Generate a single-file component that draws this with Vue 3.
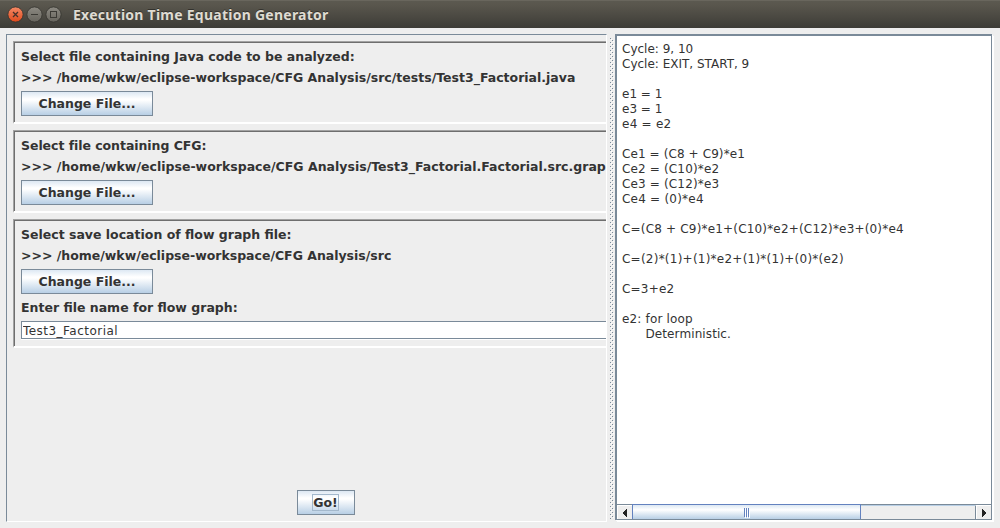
<script setup>
import { ref } from 'vue'

const fileName = ref('Test3_Factorial')
const lines = [
  ['Cycle: 9, 10', 0], ['Cycle: EXIT, START, 9', 0], ['', 0],
  ['e1 = 1', 0], ['e3 = 1', 0], ['e4 = e2', 0.25], ['', 0],
  ['Ce1 = (C8 + C9)*e1', 0.1], ['Ce2 = (C10)*e2', 0.15], ['Ce3 = (C12)*e3', 0.15], ['Ce4 = (0)*e4', 0.22], ['', 0],
  ['C=(C8 + C9)*e1+(C10)*e2+(C12)*e3+(0)*e4', 0.18], ['', 0],
  ['C=(2)*(1)+(1)*e2+(1)*(1)+(0)*(e2)', 0.24], ['', 0],
  ['C=3+e2', 0.2], ['', 0],
  ['e2: for loop', 0.17], ['      Deterministic.', 0.1],
]

const panels = [
  {
    title: 'Select file containing Java code to be analyzed:', titleGap: 0,
    path: '>>> /home/wkw/eclipse-workspace/CFG Analysis/src/tests/Test3_Factorial.java', pathGap: 0,
  },
  {
    title: 'Select file containing CFG:', titleGap: -0.05,
    path: '>>> /home/wkw/eclipse-workspace/CFG Analysis/Test3_Factorial.Factorial.src.grap', pathGap: 0.01,
  },
  {
    title: 'Select save location of flow graph file:', titleGap: 0,
    path: '>>> /home/wkw/eclipse-workspace/CFG Analysis/src', pathGap: -0.01, named: true,
  },
]
</script>

<template>
  <div class="window">
    <header class="titlebar">
      <svg class="controls" width="56" height="20" viewBox="0 0 56 20">
        <defs>
          <linearGradient id="close" x1="0" y1="0" x2="0" y2="1">
            <stop offset="0" stop-color="#f58a66" /><stop offset="1" stop-color="#df4a1c" />
          </linearGradient>
          <linearGradient id="grey" x1="0" y1="0" x2="0" y2="1">
            <stop offset="0" stop-color="#8d8a82" /><stop offset="1" stop-color="#66645d" />
          </linearGradient>
        </defs>
        <circle cx="9.5" cy="9.5" r="7.6" fill="url(#close)" stroke="#33322d" stroke-width=".8" />
        <path d="M7 7l5 5M12 7l-5 5" stroke="#46312a" stroke-width="1.3" />
        <circle cx="28.5" cy="9.5" r="7.6" fill="url(#grey)" stroke="#35342f" stroke-width=".8" />
        <path d="M25 9.5h7" stroke="#3b3a35" />
        <circle cx="47.5" cy="9.5" r="7.6" fill="url(#grey)" stroke="#35342f" stroke-width=".8" />
        <rect x="44.5" y="6.5" width="6" height="6" fill="none" stroke="#3b3a35" />
      </svg>
      <span class="title">Execution Time Equation Generator</span>
    </header>
    <main class="split">
      <section class="left">
        <div class="forms">
          <div v-for="p in panels" :key="p.title" class="panel">
            <div class="label" :style="{ letterSpacing: p.titleGap + 'px' }">{{ p.title }}</div>
            <div class="label" :style="{ letterSpacing: p.pathGap + 'px' }">{{ p.path }}</div>
            <button class="btn change">Change File...</button>
            <template v-if="p.named">
              <div class="label">Enter file name for flow graph:</div>
              <input v-model="fileName" class="field" />
            </template>
          </div>
        </div>
        <button class="btn go"><span class="focus">Go!</span></button>
      </section>
      <svg class="divider" width="4" height="481">
        <defs>
          <pattern id="bumps" width="4" height="4" patternUnits="userSpaceOnUse">
            <rect width="1" height="1" fill="#7a8a99" /><rect x="2" y="2" width="1" height="1" fill="#7a8a99" />
            <rect x="1" y="1" width="1" height="1" fill="#fff" /><rect x="3" y="3" width="1" height="1" fill="#fff" />
          </pattern>
        </defs>
        <rect width="4" height="481" fill="url(#bumps)" />
      </svg>
      <section class="right">
        <div class="output">
          <div v-for="([text, gap], i) in lines" :key="i" class="line" :style="{ letterSpacing: gap + 'px' }">{{ text }}</div>
        </div>
        <div class="scrollbar">
          <div class="arrow"><svg width="4" height="8" shape-rendering="crispEdges"><path d="M3 0h1v8h-1v-1h-1v-1h-1v-1h-1v-2h1v-1h1v-1h1z" fill="#222" /></svg></div>
          <div class="track">
            <div class="thumb"><i></i><i></i><i></i></div>
          </div>
          <div class="arrow next"><svg width="4" height="8" shape-rendering="crispEdges"><path d="M0 0h1v1h1v1h1v1h1v2h-1v1h-1v1h-1v1h-1z" fill="#222" /></svg></div>
        </div>
      </section>
    </main>
  </div>
</template>

<style>
body { margin: 0; overflow: hidden; }
</style>

<style scoped>
* { box-sizing: border-box; }
.window {
  width: 1000px; height: 528px; background: #eee; color: #333; overflow: hidden;
  display: flex; flex-direction: column;
  font-family: "DejaVu Sans", sans-serif; font-size: 12px; line-height: 15px;
}
.titlebar {
  height: 28px; flex: none; display: flex; align-items: center; padding-left: 6px;
  background: linear-gradient(#5b5950, #59564d 15%, #3d3c37);
  border-top: 1px solid #69665d;
}
.controls { flex: none; }
.title {
  margin-left: 11px; color: #dfdbd2; font: bold 14px/20px "Noto Sans", sans-serif; letter-spacing: 0.25px;
  white-space: nowrap; text-shadow: 0 -1px 0 #33322d;
}
.split { flex: 1; min-height: 0; display: flex; padding: 6px; }
.left {
  width: 601px; flex: none; overflow: hidden; display: flex; flex-direction: column;
  align-items: center; justify-content: space-between; padding: 6px 0 6px 6px;
  border: 1px solid #7a8a99; border-right-color: #fff; border-bottom-color: #fff;
}
.forms { width: 100%; display: flex; flex-direction: column; gap: 6px; }
.panel {
  display: flex; flex-direction: column; align-items: flex-start; gap: 6px; padding: 7px 0 6px 7px;
  border: solid #a2a2a2; border-width: 1px 0 2px 1px; border-bottom-color: #fff;
  box-shadow: inset 1px 1px 0 #6e6e6e;
}
.label { font-size: 12.5px; font-weight: bold; white-space: pre; height: 15px; }
.btn {
  border: 1px solid #7a8a99; height: 25px; padding: 0; color: #333;
  background: linear-gradient(#dde8f3, #fff 30%, #fff 35%, #b8cfe5);
  font: bold 12.5px/15px "DejaVu Sans", sans-serif;
}
.change { width: 132px; }
.go { width: 58px; margin-left: 32px; }
.focus { display: inline-block; box-shadow: 0 0 0 1px #a3b8cc; }
.field {
  display: block; width: 100%; height: 18px; margin-bottom: 1px; border: solid #7a8a99; border-width: 1px 0 1px 1px;
  border-radius: 0; box-shadow: 0 1px 0 #fff; background: #fff; color: #333; padding: 1px 1px 0; outline: none;
  font: 12px/15px "DejaVu Sans", sans-serif; letter-spacing: 0.47px;
}
.divider { margin: 4px 1px 0 3px; flex: none; display: block; }
.right {
  width: 377px; height: 486px; flex: none; display: flex; flex-direction: column; background: #fff;
  border: solid #7a8a99; border-width: 2px 1px 1px 2px; box-shadow: 1px 1px 0 #fff, 2px 2px 0 #fff;
}
.output { flex: 1; padding: 6px 5px; overflow: hidden; }
.line { white-space: pre; height: 15px; }
.scrollbar { height: 15px; flex: none; display: flex; border-top: 1px solid #7a8a99; background: #eee; }
.arrow { width: 15px; flex: none; display: flex; align-items: center; justify-content: center; border: solid #fff; border-width: 1px 0 0 1px; }
.next { width: 16px; border-left: 1px solid #7a8a99; box-shadow: inset 1px 0 0 #fff; }
.track { flex: 1; border-top: 1px solid #b8cfe5; }
.thumb {
  width: 229px; height: 15px; margin-top: -2px; display: flex; align-items: center; justify-content: center; gap: 1px;
  border: 1px solid #6382bf; border-bottom: 0; background: linear-gradient(#dde8f3, #fff 35%, #b8cfe5);
}
.thumb i { width: 1px; height: 9px; background: #6382bf; box-shadow: 1px 1px 0 #fff; }
</style>
